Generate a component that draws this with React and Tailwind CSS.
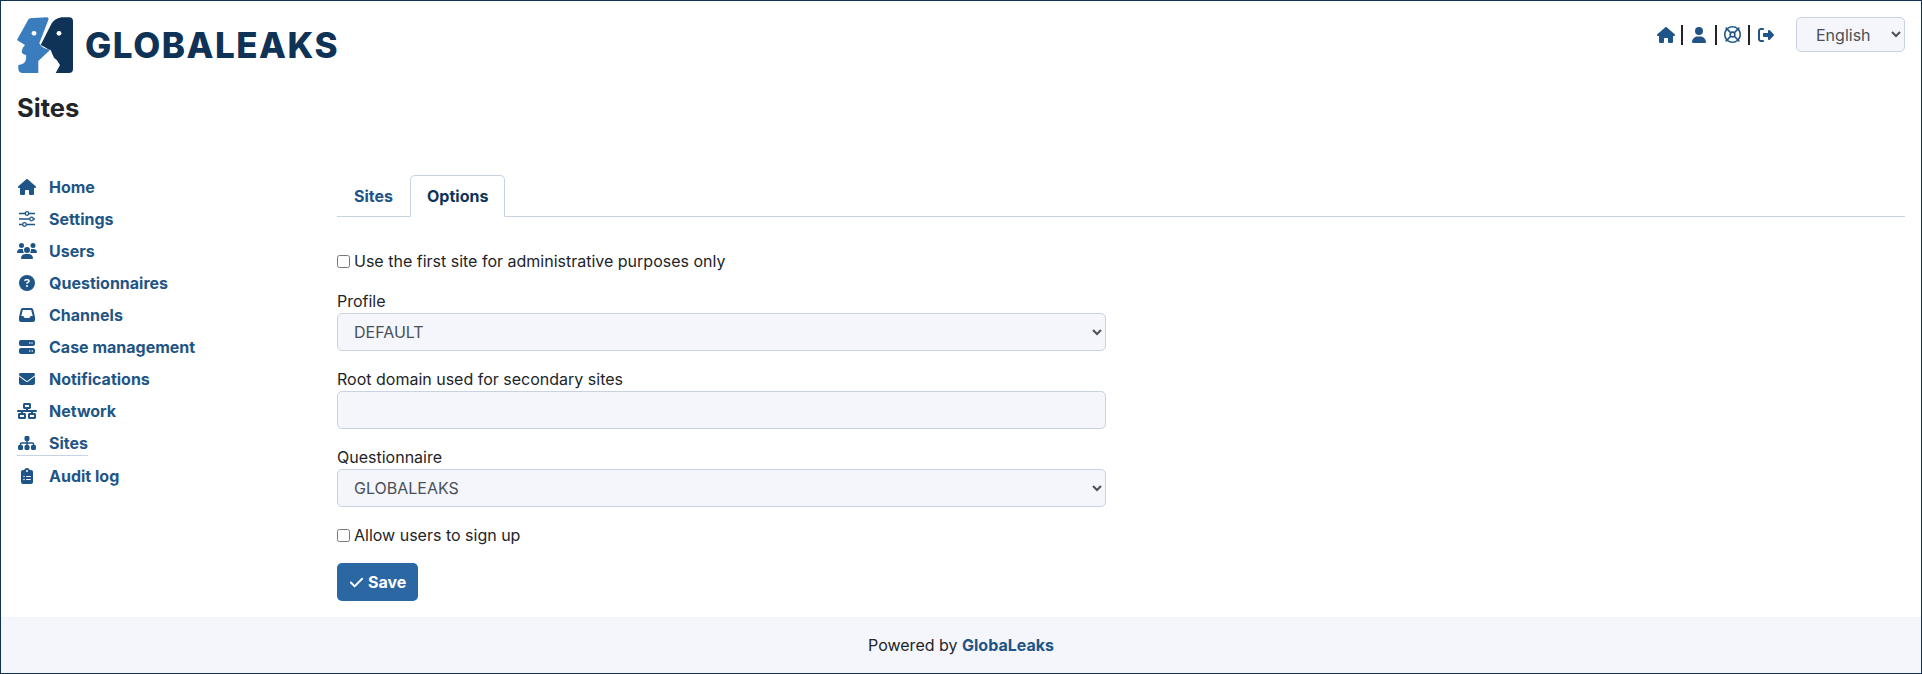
import React from "react";
import { FaHouse, FaUsers, FaCircleQuestion, FaInbox, FaServer, FaEnvelope, FaNetworkWired, FaSitemap, FaClipboardList, FaUser, FaCheck, FaRegLifeRing, FaRightFromBracket } from "react-icons/fa6";

function Sliders({ className }) {
  return (
    <svg className={className} viewBox="0 0 20 16" fill="none" stroke="currentColor">
      <path strokeWidth="1.5" d="M2 2.5h6.2M11.8 2.5H18M2 8h10.7M16.3 8H18M2 13.5h3.7M9.3 13.5H18" />
      <circle cx="10" cy="2.5" r="1.8" strokeWidth="1.3" />
      <circle cx="14.5" cy="8" r="1.8" strokeWidth="1.3" />
      <circle cx="7.5" cy="13.5" r="1.8" strokeWidth="1.3" />
    </svg>
  );
}

const nav = [
  ["Home", FaHouse], ["Settings", Sliders], ["Users", FaUsers], ["Questionnaires", FaCircleQuestion], ["Channels", FaInbox],
  ["Case management", FaServer], ["Notifications", FaEnvelope], ["Network", FaNetworkWired], ["Sites", FaSitemap], ["Audit log", FaClipboardList],
];

function Logo() {
  return (
    <svg width="56" height="56" viewBox="0 0 56 56">
      <path fill="#3a7dbf" d="M13 1.3 L29 0.2 Q32.5 0 31.3 3 L22.3 26.3 Q24 30 27 31 L33 33 L21.3 44 L21.3 56 L5 56 Q1.3 55.5 1.3 51 L1.3 48 Q7 47.5 8.5 44 Q9.5 40 9 38 Q5 37 4.7 34.7 Q5.5 30 8 28 L0.3 23.3 L0.3 22.3 L10 5 Q11 2 13 1.3 Z" />
      <circle cx="17" cy="16.3" r="2.4" fill="#fff" />
      <path fill="#0f3357" d="M44.7 0.2 L52 0.2 Q56 0.2 56 4 L56 52 Q56 56 52 56 L38.7 56 L43 48 L39.7 43 Q36.5 41 35.7 38 L33.7 33 L31.3 32.3 L28 30.3 L23.7 28 L34.7 6.3 Q38 1.3 44.7 0.2 Z" />
      <circle cx="42" cy="16.3" r="2.4" fill="#fff" />
    </svg>
  );
}

function Field({ label, children }) {
  return (
    <div className="mb-4">
      <label className="block leading-6">{label}</label>
      {children}
    </div>
  );
}

const control = "block w-full h-[38px] rounded-[5px] border border-[#c7d2e2] bg-[#f4f6fb] pl-3 text-[#495057] text-base";

export default function App() {
  return (
    <div className="h-[674px] flex flex-col border border-[#0f3357] bg-white text-[#212529] text-base overflow-hidden" style={{ fontFamily: "Inter, sans-serif" }}>
      <header className="flex justify-between items-start pt-4 pl-4 pr-4">
        <div className="flex items-center">
          <Logo />
          <span className="ml-3 text-[#0f3357] text-[35px] leading-none font-extrabold tracking-[1.5px]">GLOBALEAKS</span>
        </div>
        <div className="flex items-center h-[35px]">
          <div className="flex items-center text-[#1f5586] mr-[22px]">
            <FaHouse className="w-[18px] h-4" />
            <span className="ml-[6px] mr-[9px] w-[2px] h-5 bg-[#212529]" />
            <FaUser className="w-[14px] h-4" />
            <span className="ml-[9px] mr-[7px] w-[2px] h-5 bg-[#212529]" />
            <FaRegLifeRing className="w-[17px] h-[17px]" />
            <span className="ml-[7px] mr-[8px] w-[2px] h-5 bg-[#212529]" />
            <FaRightFromBracket className="w-4 h-4" />
          </div>
          <select className="w-[109px] h-[35px] rounded-[5px] border border-[#c7d2e2] bg-[#f4f6fb] pl-[15px] text-[#495057] text-base">
            <option>English</option>
          </select>
        </div>
      </header>

      <h1 className="pl-4 mt-[17px] text-[25.6px] leading-9 font-bold">Sites</h1>

      <div className="flex flex-1 mt-[45px] pl-4 pr-4">
        <nav className="w-[320px] shrink-0">
          <ul>
            {nav.map(([name, Icon]) => (
              <li key={name} className={"flex items-center " + (name === "Sites" ? "h-[33px]" : "h-8")}>
                <a className={"flex items-center font-bold text-[#1f5586] " + (name === "Sites" ? "border-b border-[#c7d2e2]" : "")}>
                  <span className="w-8 flex justify-start"><Icon className="w-5 h-4" /></span>
                  <span>{name}</span>
                </a>
              </li>
            ))}
          </ul>
        </nav>

        <main className="flex-1 pt-1">
          <div className="flex border-b border-[#c7d2e2] h-[42px]">
            <a className="px-4 pt-2 font-bold text-[#1f5586] border border-transparent h-[42px]">Sites</a>
            <a className="px-4 pt-2 font-bold text-[#0f3357] border border-[#c7d2e2] border-b-white rounded-t-[5px] h-[42px]">Options</a>
          </div>

          <div className="w-[769px] mt-[32px]">
            <label className="flex items-center h-6 mb-4">
              <input type="checkbox" className="w-[13px] h-[13px] mr-1" />
              <span>Use the first site for administrative purposes only</span>
            </label>
            <Field label="Profile">
              <select className={control}><option>DEFAULT</option></select>
            </Field>
            <Field label="Root domain used for secondary sites">
              <input className={control} />
            </Field>
            <Field label="Questionnaire">
              <select className={control}><option>GLOBALEAKS</option></select>
            </Field>
            <label className="flex items-center h-6 mt-4 mb-4">
              <input type="checkbox" className="w-[13px] h-[13px] mr-1" />
              <span>Allow users to sign up</span>
            </label>
            <button className="flex items-center h-[38px] px-3 rounded-[5px] bg-[#2a67a3] text-white font-bold">
              <FaCheck className="w-[15px] h-[15px] mr-1" />
              Save
            </button>
          </div>
        </main>
      </div>

      <footer className="h-[56px] bg-[#f4f6fb] flex items-center justify-center">
        <span>Powered by <a className="font-bold text-[#1f5586]">GlobaLeaks</a></span>
      </footer>
    </div>
  );
}
